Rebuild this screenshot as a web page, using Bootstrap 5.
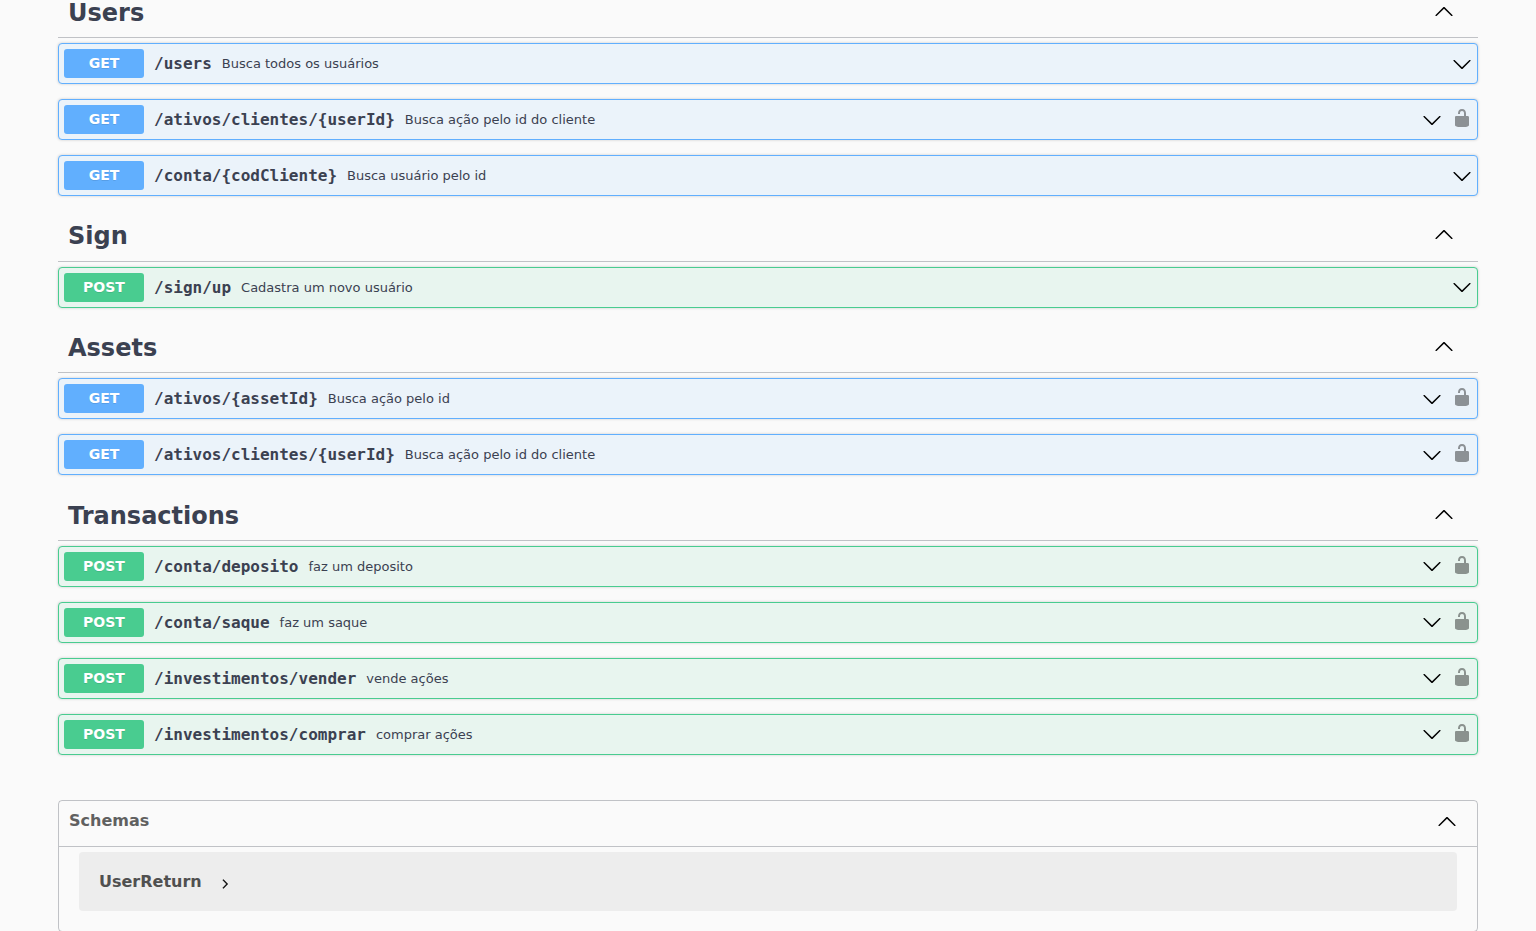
<!DOCTYPE html>
<html lang="pt">
<head>
<meta charset="utf-8">
<title>Swagger UI</title>
<link href="https://cdn.jsdelivr.net/npm/bootstrap@5.3.0/dist/css/bootstrap.min.css" rel="stylesheet">
<style>
html,body{height:931px;overflow:hidden}
body{background:#fafafa;font-family:"DejaVu Sans",sans-serif;color:#3b4151}
.api-wrap{width:1420px;margin:-13px auto 0}
.tag-head{height:50px;padding:10px 14px 0 10px;margin:0 0 5px;border-bottom:1px solid rgba(59,65,81,.3)}
.tag-tall{height:51px}
.tag-low{padding-top:11px}
.tag-title{font-size:24px;font-weight:700;line-height:28px;margin:1px 0 0;color:#3b4151}
.tag-head svg{display:block;width:20px;height:20px;margin-right:10px;margin-top:3px}
.schema-head svg{display:block;width:20px;height:20px;margin-right:20px;margin-bottom:6px}
.op-row{height:41px;margin-bottom:15px;padding:5px;border:1px solid;border-radius:4px;box-shadow:0 0 3px rgba(0,0,0,.19)}
.op-get{background:#ebf3fa;border-color:#61affe}
.op-post{background:#e8f5ef;border-color:#49cc90}
.verb{width:80px;height:29px;flex:none;border-radius:3px;color:#fff;font-size:14px;font-weight:700;line-height:29px;text-align:center;text-shadow:0 1px 0 rgba(0,0,0,.1)}
.op-get .verb{background:#61affe}
.op-post .verb{background:#49cc90}
.op-path{font-family:"DejaVu Sans Mono",monospace;font-size:16px;font-weight:700;line-height:20px;padding-left:10px;padding-right:10px;color:#3b4151}
.op-desc{font-size:13px;line-height:20px;color:#3b4151}
.chev{display:block;width:20px;height:20px;flex:none;margin-left:auto;fill:#000}
.op-post .chev{margin-bottom:2px}
.lock{display:block;width:20px;height:20px;flex:none;margin-left:10px;margin-bottom:3px;fill:#000;opacity:.4}
.schema-box{margin-top:45px;height:132px;border:1px solid rgba(59,65,81,.3);border-radius:4px}
.schema-head{height:46px;padding-left:10px;border-bottom:1px solid rgba(59,65,81,.3)}
.schema-title{font-size:16px;font-weight:700;line-height:20px;margin:0;color:#606060;padding-bottom:6px}
.model-box{margin:5px 20px 0;height:59px;padding-left:20px;border-radius:4px;background:#ededed}
.model-name{font-size:16px;font-weight:700;color:#505050;width:121px}
.caret-r{display:block;width:10px;height:10px;fill:#000;stroke:#000;stroke-width:1.4;margin-top:4px}
</style>
</head>
<body>
<svg width="0" height="0" class="d-block">
<defs>
<symbol id="down" viewBox="0 0 20 20"><path d="M17.418 6.109c.272-.268.709-.268.979 0s.271.701 0 .969l-7.908 7.83c-.27.268-.707.268-.979 0l-7.908-7.83c-.27-.268-.27-.701 0-.969.271-.268.709-.268.979 0L10 13.25l7.418-7.141z"/></symbol>
<symbol id="up" viewBox="0 0 20 20"><path d="M17.418 14.908c.272.268.709.268.979 0s.271-.701 0-.969l-7.908-7.83c-.27-.268-.707-.268-.979 0l-7.908 7.83c-.27.268-.27.701 0 .969.271.268.709.268.979 0L10 7.767l7.418 7.141z"/></symbol>
<symbol id="open" viewBox="0 0 20 20"><path d="M15.8 8H14V5.6C14 2.703 12.665 1 10 1 7.334 1 6 2.703 6 5.6V6h2v-.801C8 3.754 8.797 3 10 3c1.203 0 2 .754 2 2.199V8H4c-.553 0-1 .646-1 1.199V17c0 .549.428 1.139.951 1.307l1.197.387C5.672 18.861 6.55 19 7.1 19h5.8c.549 0 1.428-.139 1.951-.307l1.196-.387c.524-.167.953-.757.953-1.306V9.199C17 8.646 16.352 8 15.8 8z"/></symbol>
<symbol id="right" viewBox="0 0 20 20"><path d="M13.25 10L6.109 2.58c-.268-.27-.268-.707 0-.979.268-.27.701-.27.969 0l7.83 7.908c.268.271.268.709 0 .979l-7.83 7.908c-.268.271-.701.27-.969 0-.268-.269-.268-.707 0-.979L13.25 10z"/></symbol>
</defs>
</svg>
<main class="api-wrap">

<div class="tag-head tag-tall tag-low d-flex align-items-start justify-content-between"><h3 class="tag-title">Users</h3><svg><use href="#up"/></svg></div>
<div class="op-row op-get d-flex align-items-center"><span class="verb">GET</span><span class="op-path">/users</span><span class="op-desc">Busca todos os usuários</span><svg class="chev"><use href="#down"/></svg></div>
<div class="op-row op-get d-flex align-items-center"><span class="verb">GET</span><span class="op-path">/ativos/clientes/{userId}</span><span class="op-desc">Busca ação pelo id do cliente</span><svg class="chev"><use href="#down"/></svg><svg class="lock"><use href="#open"/></svg></div>
<div class="op-row op-get d-flex align-items-center"><span class="verb">GET</span><span class="op-path">/conta/{codCliente}</span><span class="op-desc">Busca usuário pelo id</span><svg class="chev"><use href="#down"/></svg></div>

<div class="tag-head tag-tall d-flex align-items-start justify-content-between"><h3 class="tag-title">Sign</h3><svg><use href="#up"/></svg></div>
<div class="op-row op-post d-flex align-items-center"><span class="verb">POST</span><span class="op-path">/sign/up</span><span class="op-desc">Cadastra um novo usuário</span><svg class="chev"><use href="#down"/></svg></div>

<div class="tag-head d-flex align-items-start justify-content-between"><h3 class="tag-title">Assets</h3><svg><use href="#up"/></svg></div>
<div class="op-row op-get d-flex align-items-center"><span class="verb">GET</span><span class="op-path">/ativos/{assetId}</span><span class="op-desc">Busca ação pelo id</span><svg class="chev"><use href="#down"/></svg><svg class="lock"><use href="#open"/></svg></div>
<div class="op-row op-get d-flex align-items-center"><span class="verb">GET</span><span class="op-path">/ativos/clientes/{userId}</span><span class="op-desc">Busca ação pelo id do cliente</span><svg class="chev"><use href="#down"/></svg><svg class="lock"><use href="#open"/></svg></div>

<div class="tag-head tag-tall tag-low d-flex align-items-start justify-content-between"><h3 class="tag-title">Transactions</h3><svg><use href="#up"/></svg></div>
<div class="op-row op-post d-flex align-items-center"><span class="verb">POST</span><span class="op-path">/conta/deposito</span><span class="op-desc">faz um deposito</span><svg class="chev"><use href="#down"/></svg><svg class="lock"><use href="#open"/></svg></div>
<div class="op-row op-post d-flex align-items-center"><span class="verb">POST</span><span class="op-path">/conta/saque</span><span class="op-desc">faz um saque</span><svg class="chev"><use href="#down"/></svg><svg class="lock"><use href="#open"/></svg></div>
<div class="op-row op-post d-flex align-items-center"><span class="verb">POST</span><span class="op-path">/investimentos/vender</span><span class="op-desc">vende ações</span><svg class="chev"><use href="#down"/></svg><svg class="lock"><use href="#open"/></svg></div>
<div class="op-row op-post d-flex align-items-center"><span class="verb">POST</span><span class="op-path">/investimentos/comprar</span><span class="op-desc">comprar ações</span><svg class="chev"><use href="#down"/></svg><svg class="lock"><use href="#open"/></svg></div>

<section class="schema-box">
<div class="schema-head d-flex align-items-center justify-content-between"><h4 class="schema-title">Schemas</h4><svg><use href="#up"/></svg></div>
<div class="model-box d-flex align-items-center"><span class="model-name">UserReturn</span><svg class="caret-r"><use href="#right"/></svg></div>
</section>
</main>
</body>
</html>
